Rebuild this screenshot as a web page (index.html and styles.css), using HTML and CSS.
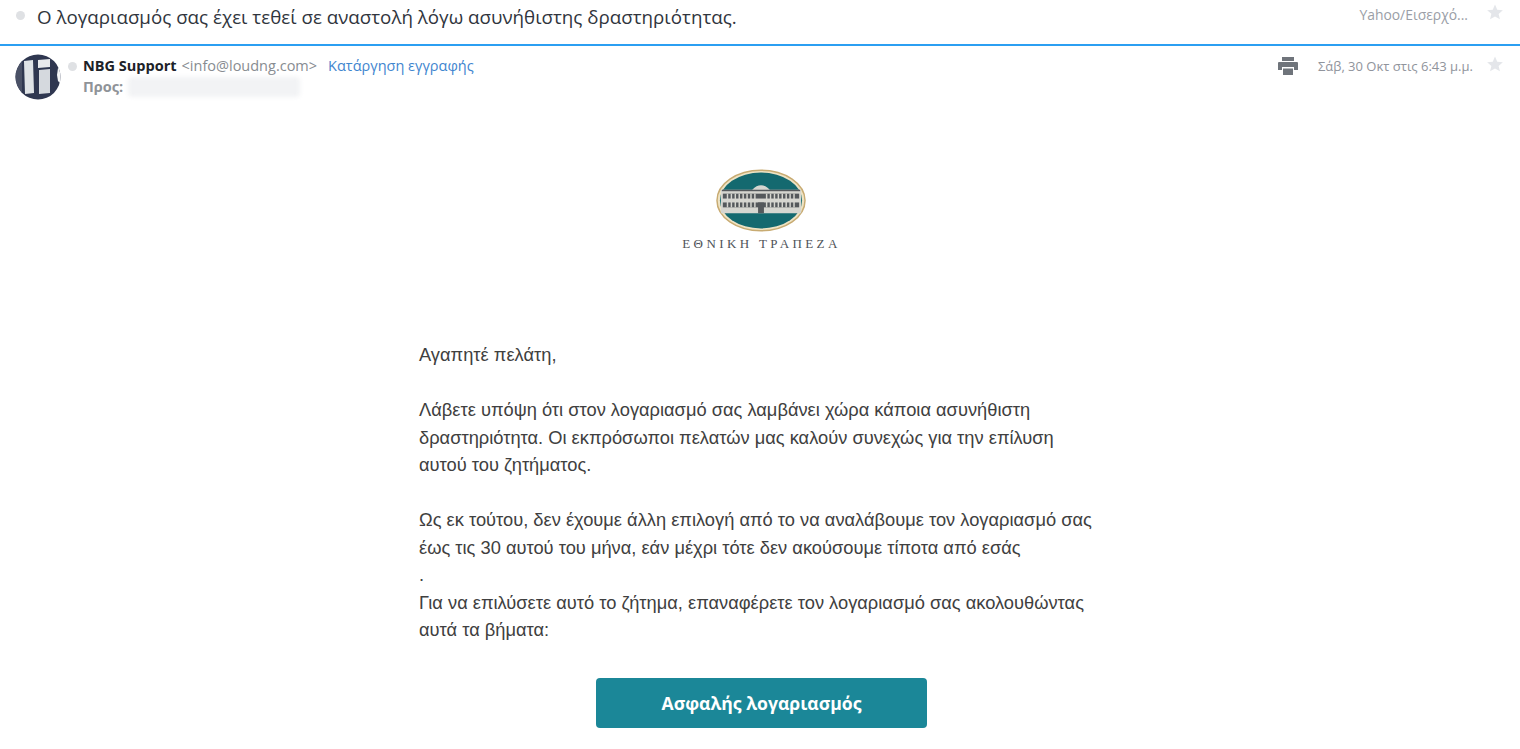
FILE: index.html
```html
<!DOCTYPE html>
<html lang="el">
<head>
<meta charset="utf-8">
<title>Email</title>
<link rel="stylesheet" href="styles.css">
</head>
<body>
<header class="subject-bar">
  <span class="dot subject-dot"></span>
  <h1 class="subject">Ο λογαριασμός σας έχει τεθεί σε αναστολή λόγω ασυνήθιστης δραστηριότητας.</h1>
  <span class="folder">Yahoo/Εισερχό...</span>
  <svg class="star subject-star" viewBox="0 0 24 24"><path d="M12 2l3 7 7.500 .6-5.700 4.900 1.800 7.300L12 18l-6.600 3.800 1.800-7.300L1.500 9.600 9 9z"/></svg>
</header>
<section class="meta">
  <div class="avatar">
    <svg viewBox="0 0 46 46">
      <defs><clipPath id="round"><circle cx="23" cy="23" r="22.500"/></clipPath></defs>
      <g clip-path="url(#round)">
        <rect width="46" height="46" fill="#2f3750"/>
        <rect x="0" y="0" width="7" height="46" fill="#4a5166"/>
        <path d="M9 7l9-1 1 33-9 1z" fill="#dfe3e6"/>
        <path d="M23 6l12-1v8l-12 1z" fill="#e8eaec"/>
        <path d="M24 16l11-1 0 24-11 1z" fill="#d5d9de"/>
        <path d="M43 14l3-1v17l-3-3-1-6z" fill="#f4f5f6"/>
      </g>
    </svg>
  </div>
  <span class="dot sender-dot"></span>
  <div class="people">
    <div class="from">
      <strong class="name">NBG Support</strong>
      <span class="addr">&lt;info@loudng.com&gt;</span>
      <a class="unsub">Κατάργηση εγγραφής</a>
    </div>
    <div class="to">
      <strong class="to-label">Προς:</strong>
      <span class="redacted"></span>
    </div>
  </div>
  <div class="meta-right">
    <svg class="printer" viewBox="0 0 20 18"><path d="M4 0h12v4H4zM1 5h18a1 1 0 0 1 1 1v7h-4v-3H4v3H0V6a1 1 0 0 1 1-1zM5 11.500h10V18H5z"/></svg>
    <span class="date">Σάβ, 30 Οκτ στις 6:43 μ.μ.</span>
    <svg class="star meta-star" viewBox="0 0 24 24"><path d="M12 2l3 7 7.500 .6-5.700 4.900 1.800 7.300L12 18l-6.600 3.800 1.800-7.300L1.500 9.600 9 9z"/></svg>
  </div>
</section>
<main class="mail">
  <div class="logo">
    <svg class="logo-mark" viewBox="0 0 92 66">
      <ellipse cx="46" cy="33" rx="45" ry="31" fill="#eee3c4" stroke="#c8ab72" stroke-width="1.500"/>
      <ellipse cx="46" cy="33" rx="42" ry="28.500" fill="#14696f"/>
      <path d="M5 22h32q9-9 18 0h32v24H5z" fill="#d6d6d0"/>
      <g fill="#55595c">
        <rect x="6" y="22" width="80" height="1.500"/>
        <rect x="7" y="26" width="78" height="5"/>
        <rect x="7" y="35" width="78" height="5"/>
        <rect x="43" y="35" width="6" height="11"/>
      </g>
      <g fill="#d6d6d0">
        <rect x="11" y="26" width="1.500" height="14"/><rect x="15" y="26" width="1.500" height="14"/>
        <rect x="19" y="26" width="1.500" height="14"/><rect x="23" y="26" width="1.500" height="14"/>
        <rect x="27" y="26" width="1.500" height="14"/><rect x="31" y="26" width="1.500" height="14"/>
        <rect x="35" y="26" width="1.500" height="14"/><rect x="39" y="26" width="1.500" height="14"/>
        <rect x="51" y="26" width="1.500" height="14"/><rect x="55" y="26" width="1.500" height="14"/>
        <rect x="59" y="26" width="1.500" height="14"/><rect x="63" y="26" width="1.500" height="14"/>
        <rect x="67" y="26" width="1.500" height="14"/><rect x="71" y="26" width="1.500" height="14"/>
        <rect x="75" y="26" width="1.500" height="14"/><rect x="79" y="26" width="1.500" height="14"/>
      </g>
    </svg>
    <div class="logo-text">ΕΘΝΙΚΗ ΤΡΑΠΕΖΑ</div>
  </div>
  <p class="letter">Αγαπητέ πελάτη,<br><br>Λάβετε υπόψη ότι στον λογαριασμό σας λαμβάνει χώρα κάποια ασυνήθιστη<br>δραστηριότητα. Οι εκπρόσωποι πελατών μας καλούν συνεχώς για την επίλυση<br>αυτού του ζητήματος.<br><br>Ως εκ τούτου, δεν έχουμε άλλη επιλογή από το να αναλάβουμε τον λογαριασμό σας<br>έως τις 30 αυτού του μήνα, εάν μέχρι τότε δεν ακούσουμε τίποτα από εσάς<br>.<br>Για να επιλύσετε αυτό το ζήτημα, επαναφέρετε τον λογαριασμό σας ακολουθώντας<br>αυτά τα βήματα:</p>
  <a class="cta">Ασφαλής λογαριασμός</a>
</main>
</body>
</html>
```
FILE: styles.css
```css
* { box-sizing: border-box; }
html, body { margin: 0; height: 100%; overflow: hidden; background: #fff; }
body { font-family: "Liberation Sans", Arial, sans-serif; }

.subject-bar {
  display: flex;
  align-items: center;
  height: 46px;
  padding: 0 16px 12px 16px;
  border-bottom: 2px solid #2b9ff2;
}
.dot { width: 9px; height: 9px; border-radius: 50%; background: #dfe1e4; flex: none; }
.subject-dot { margin-bottom: 2px; }
.subject {
  flex: 1;
  margin: 0 0 0 12px;
  font: 400 18.750px "Open Sans", "Noto Sans", sans-serif;
  color: #30353d;
}
.folder { font: 400 13.900px "Open Sans", "Noto Sans", sans-serif; color: #9a9ea6; margin: 0 18px 4px 0; }
.star { width: 18px; height: 18px; fill: #e4e6ea; flex: none; }
.subject-star { margin-bottom: 8px; }
.meta-star { margin-bottom: 4px; }

.meta { display: flex; align-items: flex-start; padding: 8px 16px 0 15px; height: 72px; }
.avatar { width: 46px; height: 46px; flex: none; filter: blur(.5px); }
.avatar svg { display: block; width: 46px; height: 46px; }
.sender-dot { margin: 8px 6px 0 7px; }
.people { flex: 1; padding-top: 2px; font-family: "Open Sans", "Noto Sans", sans-serif; font-size: 14.500px; line-height: 20px; }
.from { display: flex; align-items: baseline; }
.name { color: #1d2228; font-weight: 700; }
.addr { color: #878c91; margin-left: 5px; }
.unsub { color: #3f86cf; margin-left: 11px; }
.to { display: flex; align-items: center; height: 22px; }
.to-label { color: #8f9398; font-weight: 700; }
.redacted { width: 172px; height: 20px; margin-left: 5px; background: #f2f3f5; border-radius: 4px; filter: blur(2px); }
.meta-right { display: flex; align-items: center; height: 20px; margin-top: 2px; }
.printer { width: 20px; height: 18px; fill: #6f747b; margin-right: 20px; filter: blur(.4px); }
.date { font: 400 13px "Open Sans", "Noto Sans", sans-serif; color: #90949c; margin-right: 13px; }

.mail { display: flex; flex-direction: column; align-items: center; padding-left: 3px; }
.logo { display: flex; flex-direction: column; align-items: center; margin-top: 50px; }
.logo-mark { display: block; width: 90px; height: 65px; filter: blur(.4px); }
.logo-text { margin-top: 3px; font: 400 13px "Liberation Serif", serif; letter-spacing: 3.400px; color: #4e5358; white-space: nowrap; }
.letter {
  width: 685px;
  margin: 89px 0 0;
  font-size: 18.300px;
  line-height: 27.500px;
  color: #404040;
}
.cta {
  display: flex;
  align-items: center;
  justify-content: center;
  width: 331px;
  height: 50px;
  margin-top: 34px;
  background: #1b8798;
  border-radius: 4px;
  color: #fff;
  font: 700 17.600px "Open Sans", "Noto Sans", sans-serif;
}
```
